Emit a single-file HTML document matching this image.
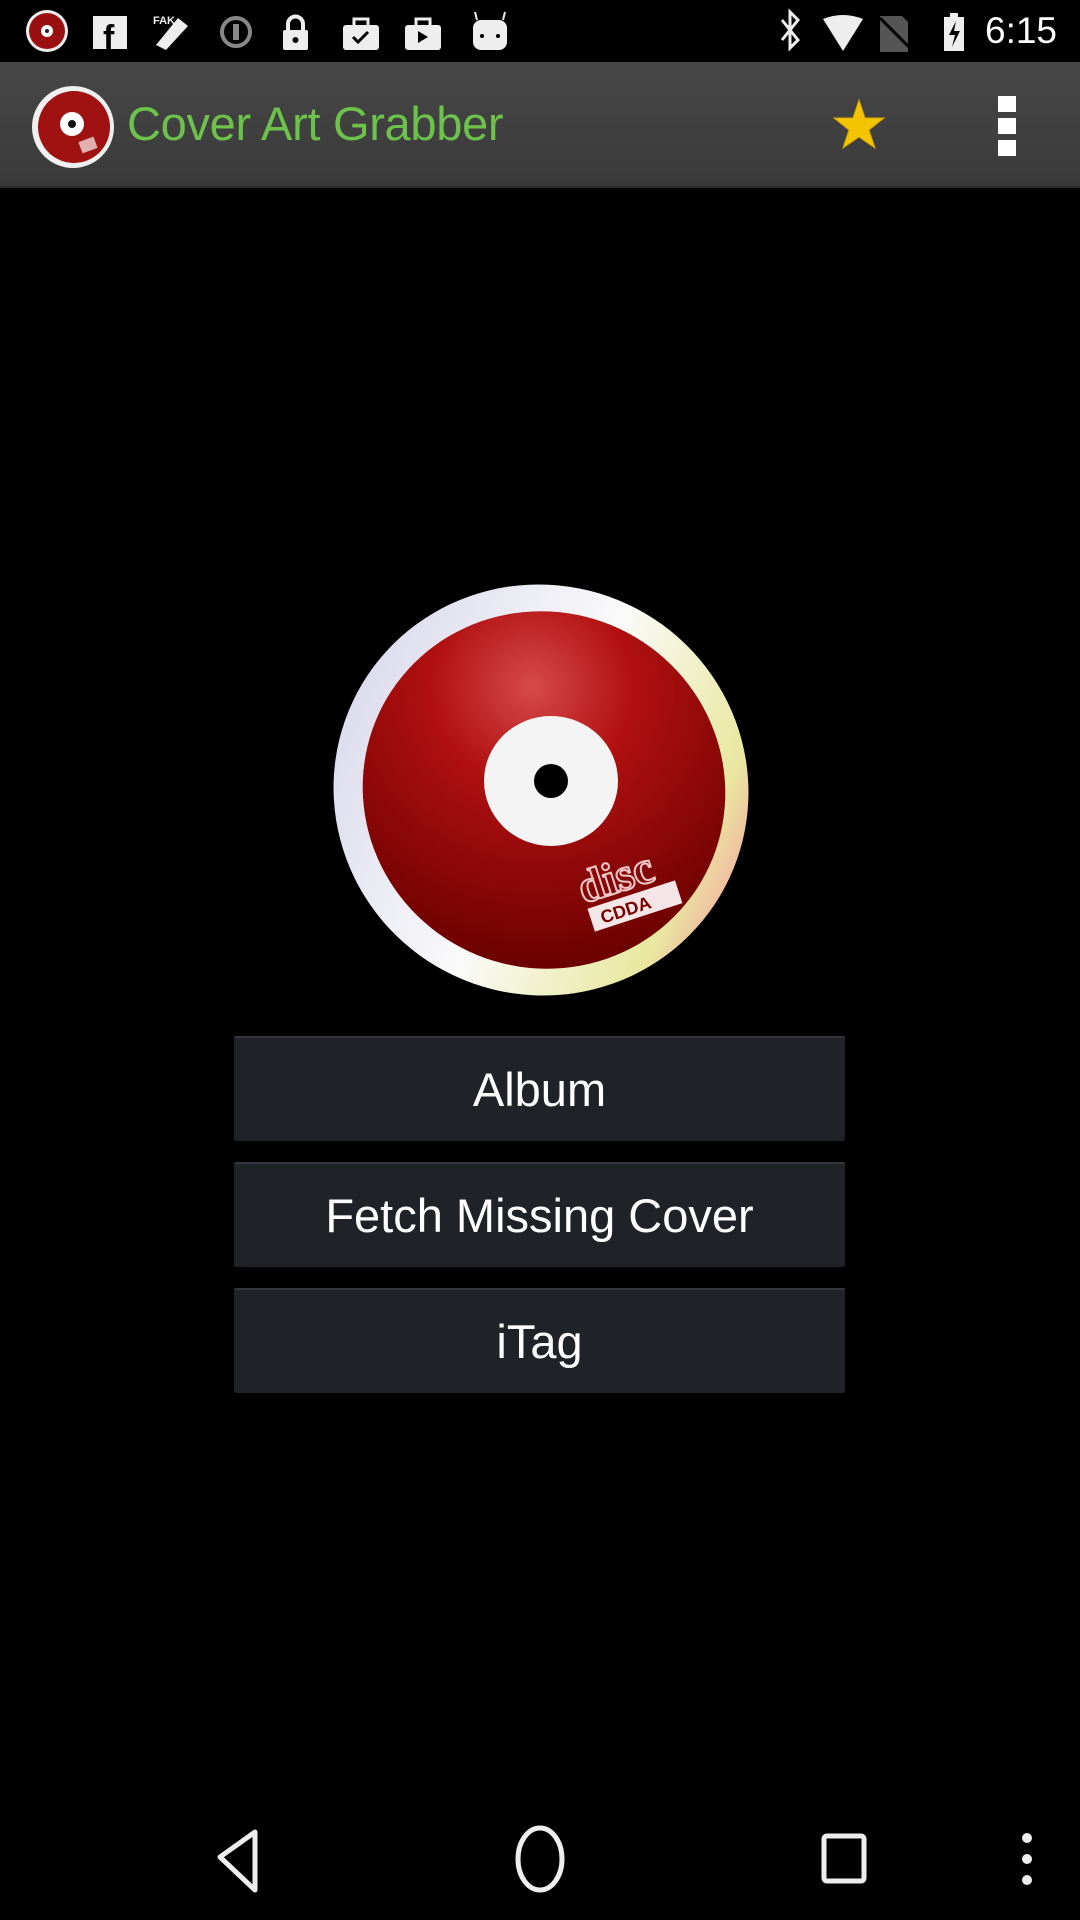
<!DOCTYPE html>
<html><head><meta charset="utf-8"><style>
*{margin:0;padding:0;box-sizing:border-box}
body{width:1080px;height:1920px;background:#000;position:relative;overflow:hidden;font-family:"Liberation Sans",sans-serif}
.abs{position:absolute}
.bar{left:0;top:62px;width:1080px;height:126px;background:linear-gradient(#474747,#3a3a3a);border-bottom:2px solid #2a2a2a}
.title{left:127px;top:96px;font-size:47px;color:#6cc24a;letter-spacing:-0.3px}
.btn{left:234px;width:611px;height:105px;background:#1f2226;border-top:2px solid #33373c;color:#fff;font-size:47px;text-align:center;line-height:103px;border-radius:2px}
.time{left:985px;top:10px;font-size:37px;color:#fff}
</style></head><body>
<!-- status bar -->
<svg class="abs" style="left:0;top:0" width="1080" height="62">
<circle cx="47" cy="31" r="21" fill="#eee"/><circle cx="47" cy="31" r="18" fill="#9a1010"/><circle cx="47" cy="31" r="6" fill="#fff"/><circle cx="47" cy="31" r="2" fill="#222"/>
<rect x="93" y="16" width="34" height="33" fill="#eee"/><text x="103" y="49" font-size="34" font-weight="bold" fill="#000" font-family="Liberation Sans">f</text>
<text x="153" y="24" font-size="11" fill="#eee" font-weight="bold">FAK</text><path d="M156 45 L178 18 L188 26 L166 50 Z" fill="#eee"/>
<circle cx="236" cy="32" r="14" fill="none" stroke="#888" stroke-width="4"/><rect x="233" y="24" width="6" height="16" fill="#888"/>
<rect x="283" y="30" width="25" height="20" rx="2" fill="#eee"/><path d="M288 30 v-6 a7.5 7.5 0 0 1 15 0 v6" stroke="#eee" stroke-width="4" fill="none"/><circle cx="295.5" cy="40" r="3" fill="#000"/>
<rect x="343" y="25" width="36" height="25" rx="3" fill="#eee"/><path d="M354 25 v-6 h14 v6" stroke="#eee" stroke-width="3" fill="none"/><path d="M353 37 l5 5 l10 -10" stroke="#000" stroke-width="3" fill="none"/>
<rect x="405" y="25" width="36" height="25" rx="3" fill="#eee"/><path d="M416 25 v-6 h14 v6" stroke="#eee" stroke-width="3" fill="none"/><path d="M418 31 l10 6 l-10 6z" fill="#000"/>
<rect x="473" y="20" width="34" height="30" rx="8" fill="#eee"/><path d="M477 20 l-2 -8 M503 20 l2 -8" stroke="#eee" stroke-width="2"/><circle cx="482" cy="36" r="2" fill="#000"/><circle cx="498" cy="36" r="2" fill="#000"/>
<path d="M782 20 l16 20 l-8 8 v-36 l8 8 l-16 20" stroke="#eee" stroke-width="3" fill="none"/>
<path d="M823 19 q20 -8 40 0 l-20 32 z" fill="#eee"/>
<path d="M880 16 h22 l6 6 v30 h-28z" fill="#555"/><path d="M880 18 l32 32" stroke="#000" stroke-width="3"/>
<rect x="944" y="17" width="20" height="34" fill="#eee"/><rect x="950" y="13" width="8" height="4" fill="#eee"/><path d="M956 21 l-7 14 h6 l-3 12 l8 -16 h-6z" fill="#000"/>
</svg>
<div class="abs time">6:15</div>
<!-- action bar -->
<div class="abs bar"></div>
<svg class="abs" style="left:30px;top:84px" width="90" height="86">
<circle cx="43" cy="43" r="41" fill="#f0f0f0"/><circle cx="44" cy="43" r="36" fill="#a01212"/><circle cx="42" cy="40" r="12" fill="#fff"/><circle cx="42" cy="40" r="4" fill="#111"/><rect x="50" y="55" width="16" height="12" fill="#e0b0b0" transform="rotate(-20 58 61)"/>
</svg>
<div class="abs title">Cover Art Grabber</div>
<svg class="abs" style="left:832px;top:98px" width="54" height="54"><path d="M27 2 L33 20 L52 20 L37 32 L43 50 L27 39 L11 50 L17 32 L2 20 L21 20Z" fill="#f5c400" stroke="#d8a800" stroke-width="1"/></svg>
<div class="abs" style="left:998px;top:96px;width:18px;height:16px;background:#fff"></div>
<div class="abs" style="left:998px;top:118px;width:18px;height:16px;background:#fff"></div>
<div class="abs" style="left:998px;top:140px;width:18px;height:16px;background:#fff"></div>
<!-- disc -->
<svg class="abs" style="left:320px;top:570px" width="440" height="440">
<defs>
<radialGradient id="r" cx="35%" cy="25%" r="80%"><stop offset="0" stop-color="#d84a4a"/><stop offset="0.35" stop-color="#b01010"/><stop offset="1" stop-color="#6a0000"/></radialGradient>
<linearGradient id="rim" x1="0" y1="0" x2="1" y2="0"><stop offset="0" stop-color="#dde"/><stop offset="0.5" stop-color="#fafafa"/><stop offset="0.9" stop-color="#e8e8a0"/><stop offset="1" stop-color="#f0c0a0"/></linearGradient>
</defs>
<ellipse cx="221" cy="220" rx="208" ry="205" fill="url(#rim)" transform="rotate(25 221 220)"/>
<ellipse cx="224" cy="220" rx="182" ry="178" fill="url(#r)" transform="rotate(25 224 220)"/>
<ellipse cx="231" cy="211" rx="67" ry="65" fill="#f4f4f4"/>
<circle cx="231" cy="211" r="17" fill="#000"/>
<g transform="rotate(-18 305 315)"><text x="260" y="320" font-size="46" fill="none" stroke="#f0c8c8" stroke-width="2" font-weight="bold" font-family="Liberation Serif">disc</text>
<rect x="262" y="326" width="92" height="24" fill="#f4e6e6"/><text x="272" y="345" font-size="18" font-weight="bold" fill="#7a0000">CDDA</text></g>
</svg>
<!-- buttons -->
<div class="abs btn" style="top:1036px">Album</div>
<div class="abs btn" style="top:1162px">Fetch Missing Cover</div>
<div class="abs btn" style="top:1288px">iTag</div>
<!-- nav bar -->
<svg class="abs" style="left:0;top:1800px" width="1080" height="120">
<path d="M255 32 L220 57 L255 90 Z" fill="none" stroke="#eee" stroke-width="5" stroke-linejoin="round"/>
<ellipse cx="540" cy="59" rx="22" ry="31" fill="none" stroke="#eee" stroke-width="5"/>
<rect x="824" y="36" width="40" height="45" rx="3" fill="none" stroke="#eee" stroke-width="5"/>
<circle cx="1027" cy="38" r="5" fill="#eee"/><circle cx="1027" cy="59" r="5" fill="#eee"/><circle cx="1027" cy="80" r="5" fill="#eee"/>
</svg>
</body></html>
